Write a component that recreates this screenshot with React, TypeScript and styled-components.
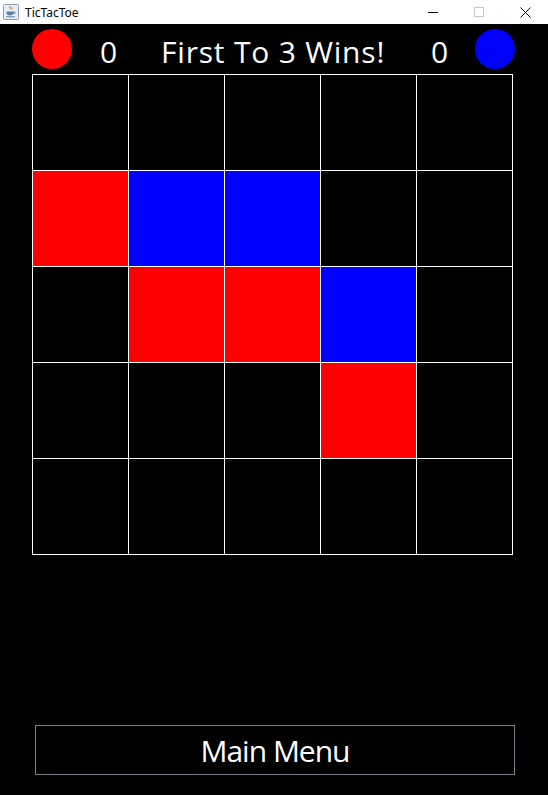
import React from "react";
import styled, { createGlobalStyle } from "styled-components";

const GlobalStyle = createGlobalStyle`
  html, body {
    margin: 0;
    padding: 0;
    background: #000;
  }
`;

const comic = `"Comic Sans MS", "Open Sans", sans-serif`;

const Window = styled.div`
  display: flex;
  flex-direction: column;
  width: 548px;
  height: 795px;
  background: #000;
  overflow: hidden;
`;

const TitleBar = styled.div`
  display: flex;
  align-items: center;
  height: 24px;
  background: #fff;
  padding-left: 3px;
  font-family: "Segoe UI", "Noto Sans", sans-serif;
  font-size: 12px;
  color: #000;
`;

const TitleText = styled.span`
  margin-left: 6px;
  flex: 1;
`;

const WindowButton = styled.div`
  display: flex;
  align-items: center;
  justify-content: center;
  width: 46px;
  height: 24px;
`;

const Header = styled.div`
  display: flex;
  align-items: center;
  height: 50px;
  padding-left: 32px;
  font-family: ${comic};
  font-size: 30px;
  color: #fff;
`;

const Token = styled.div<{ $color: string }>`
  width: 40px;
  height: 40px;
  border-radius: 50%;
  background: ${(p) => p.$color};
  flex-shrink: 0;
`;

const Score = styled.div<{ $gap: number }>`
  width: 17px;
  margin-left: ${(p) => p.$gap}px;
  text-align: center;
  padding-top: 4px;
`;

const Title = styled.div`
  width: 224px;
  margin-left: 44px;
  text-align: center;
  white-space: nowrap;
  letter-spacing: 0.8px;
  padding-top: 4px;
`;

const RightToken = styled(Token)`
  margin-left: 27px;
`;

const Board = styled.div`
  display: grid;
  grid-template-columns: repeat(5, 95px);
  grid-auto-rows: 95px;
  gap: 1px;
  padding: 1px;
  margin-left: 32px;
  width: max-content;
  background: #fff;
`;

const Cell = styled.div<{ $fill: string }>`
  background: ${(p) => p.$fill};
`;

const MenuButton = styled.button`
  margin: auto 0 20px 35px;
  width: 480px;
  height: 50px;
  background: #000;
  border: 1px solid #7a808a;
  color: #fff;
  font-family: ${comic};
  font-size: 30px;
  letter-spacing: -1px;
  padding: 0;
  cursor: pointer;
`;

const board = [
  "-----",
  "RBB--",
  "-RRB-",
  "---R-",
  "-----",
];

const fills: Record<string, string> = { R: "#ff0000", B: "#0000ff", "-": "#000" };

const JavaIcon = () => (
  <svg width="16" height="16" viewBox="0 0 16 16">
    <rect x="0.5" y="0.5" width="15" height="15" rx="1" fill="#e8eef5" stroke="#8a9bb0" />
    <path d="M7 2c-1 1.5 1 2 0 3.5M9 3c-0.8 1 0.8 1.5 0 2.5" stroke="#e07020" fill="none" strokeWidth="1" />
    <path d="M3.5 7.5h7v1.5c0 1.5-1.5 2.5-3.5 2.5S3.5 10.5 3.5 9z" fill="#5a7fa8" />
    <path d="M10.5 8h1.2c0.8 0 0.8 1.5 0 1.5h-1.2" stroke="#5a7fa8" fill="none" />
    <path d="M3 12.8h9" stroke="#5a7fa8" strokeWidth="1" />
  </svg>
);

export default function App() {
  return (
    <>
      <GlobalStyle />
      <Window>
        <TitleBar>
          <JavaIcon />
          <TitleText>TicTacToe</TitleText>
          <WindowButton>
            <svg width="10" height="10" viewBox="0 0 10 10">
              <path d="M0 5.5h10" stroke="#000" strokeWidth="1" />
            </svg>
          </WindowButton>
          <WindowButton>
            <svg width="10" height="10" viewBox="0 0 10 10">
              <rect x="0.5" y="0.5" width="9" height="9" fill="none" stroke="#c8c8c8" />
            </svg>
          </WindowButton>
          <WindowButton>
            <svg width="11" height="11" viewBox="0 0 11 11">
              <path d="M0.5 0.5l10 10M10.5 0.5l-10 10" stroke="#000" strokeWidth="1" />
            </svg>
          </WindowButton>
        </TitleBar>
        <Header>
          <Token $color="#ff0000" />
          <Score $gap={28}>0</Score>
          <Title>First To 3 Wins!</Title>
          <Score $gap={46}>0</Score>
          <RightToken $color="#0000ff" />
        </Header>
        <Board>
          {board.flatMap((row, r) =>
            row.split("").map((c, i) => <Cell key={`${r}-${i}`} $fill={fills[c]} />)
          )}
        </Board>
        <MenuButton>Main Menu</MenuButton>
      </Window>
    </>
  );
}
